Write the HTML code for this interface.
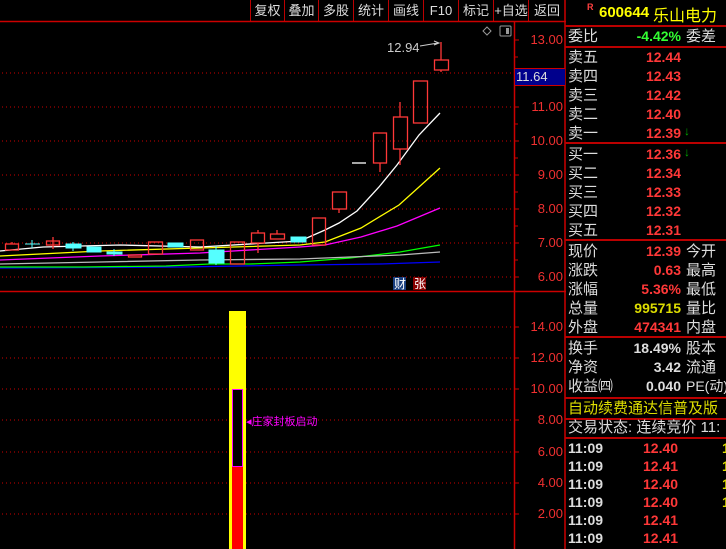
<!DOCTYPE html>
<html><head><meta charset="utf-8"><style>
*{margin:0;padding:0;box-sizing:border-box}
body{width:726px;height:549px;background:#000;overflow:hidden;position:relative;font-family:"Liberation Sans","Noto Sans CJK SC",sans-serif}
.a{position:absolute;white-space:nowrap}
.tb{position:absolute;top:0;height:22px;line-height:22px;color:#ddd;font-size:13px;text-align:center;border-left:1px solid #b00}
.r{position:absolute;left:568px;font-size:15px;color:#ddd;line-height:19px;height:19px;white-space:nowrap}
.v{position:absolute;right:45px;font-size:14px;font-weight:bold;color:#ff3838;text-align:right;line-height:19px;white-space:nowrap}
.c3{position:absolute;left:686px;font-size:15px;color:#ddd;line-height:19px;white-space:nowrap}
.hl{position:absolute;left:565px;width:161px;height:2px;background:#b00}
.ax{position:absolute;left:525px;width:38px;text-align:right;font-size:13px;color:#f03030;line-height:14px}
</style></head><body>
<div class="tb" style="left:250px;width:34px">复权</div>
<div class="tb" style="left:284px;width:34px">叠加</div>
<div class="tb" style="left:318px;width:35px">多股</div>
<div class="tb" style="left:353px;width:35px">统计</div>
<div class="tb" style="left:388px;width:35px">画线</div>
<div class="tb" style="left:423px;width:35px">F10</div>
<div class="tb" style="left:458px;width:35px">标记</div>
<div class="tb" style="left:493px;width:35px">+自选</div>
<div class="tb" style="left:528px;width:37px">返回</div>

<svg class="a" style="left:0;top:0" width="566" height="549">
<line x1="0" y1="21.5" x2="566" y2="21.5" stroke="#c00" stroke-width="1.5"/>
<line x1="0" y1="291.5" x2="566" y2="291.5" stroke="#c00" stroke-width="1.5"/>
<line x1="514.5" y1="22" x2="514.5" y2="549" stroke="#c00" stroke-width="1.5"/>
<line x1="565" y1="0" x2="565" y2="549" stroke="#c00" stroke-width="1.5"/>
<g stroke="#c00" stroke-dasharray="1 3" stroke-width="1">
<line x1="2" y1="73" x2="512" y2="73"/><line x1="2" y1="107" x2="512" y2="107"/><line x1="2" y1="141" x2="512" y2="141"/><line x1="2" y1="175" x2="512" y2="175"/><line x1="2" y1="209" x2="512" y2="209"/><line x1="2" y1="243" x2="512" y2="243"/><line x1="2" y1="277" x2="512" y2="277"/>
<line x1="2" y1="327" x2="512" y2="327"/><line x1="2" y1="358" x2="512" y2="358"/><line x1="2" y1="389" x2="512" y2="389"/><line x1="2" y1="420" x2="512" y2="420"/><line x1="2" y1="452" x2="512" y2="452"/><line x1="2" y1="483" x2="512" y2="483"/><line x1="2" y1="514" x2="512" y2="514"/>
</g>
<g stroke="#c00" stroke-width="1">
<line x1="515" y1="40" x2="519" y2="40"/><line x1="515" y1="57" x2="518" y2="57"/><line x1="515" y1="107" x2="519" y2="107"/><line x1="515" y1="124" x2="518" y2="124"/><line x1="515" y1="141" x2="519" y2="141"/><line x1="515" y1="158" x2="518" y2="158"/><line x1="515" y1="175" x2="519" y2="175"/><line x1="515" y1="192" x2="518" y2="192"/><line x1="515" y1="209" x2="519" y2="209"/><line x1="515" y1="226" x2="518" y2="226"/><line x1="515" y1="243" x2="519" y2="243"/><line x1="515" y1="260" x2="518" y2="260"/><line x1="515" y1="277" x2="519" y2="277"/>
<line x1="515" y1="327" x2="519" y2="327"/><line x1="515" y1="358" x2="519" y2="358"/><line x1="515" y1="389" x2="519" y2="389"/><line x1="515" y1="420" x2="519" y2="420"/><line x1="515" y1="452" x2="519" y2="452"/><line x1="515" y1="483" x2="519" y2="483"/><line x1="515" y1="514" x2="519" y2="514"/>
</g>
<g fill="none" stroke-width="1.3">
<polyline stroke="#00f" points="0,268 180,267 300,265 380,264 410,263 440,262"/>
<polyline stroke="#0f0" points="0,267 83,267 166,266 210,264 250,264 300,262 350,258 400,252 440,245"/>
<polyline stroke="#bbb" points="0,264 100,262 200,260 300,259 350,257 400,255 440,252"/>
<polyline stroke="#f0f" points="0,260 100,256 200,253 300,247 325,245 361,237 397,226 440,208"/>
<polyline stroke="#ff0" points="0,256 100,251 200,248 300,245 325,242 361,228 399,205 419,187 440,168"/>
<polyline stroke="#fff" points="0,251 43,247 120,245 200,247 300,241 325,230 339,223 357,211 379,187 397,165 419,135 440,113"/>
</g>
<g fill="none" stroke="#ff3838" stroke-width="1.3">
<rect x="5.5" y="244" width="13" height="6"/><line x1="12" y1="242" x2="12" y2="244"/>
<rect x="46.5" y="241" width="13" height="4"/><line x1="53" y1="237" x2="53" y2="249"/>
<rect x="128.5" y="255" width="13" height="2"/>
<rect x="148.5" y="242" width="14" height="12"/>
<rect x="190.5" y="240" width="13" height="10"/>
<rect x="230.5" y="242" width="14" height="22"/>
<rect x="251.5" y="233" width="13" height="10"/><line x1="258" y1="230" x2="258" y2="233"/><line x1="258" y1="243" x2="258" y2="253"/>
<rect x="270.5" y="234" width="14" height="5"/><line x1="277" y1="230" x2="277" y2="234"/>
<rect x="312.5" y="218" width="13" height="27"/>
<rect x="332.5" y="192" width="14" height="17"/><line x1="339" y1="209" x2="339" y2="213"/>
<rect x="373.5" y="133" width="13" height="30"/><line x1="380" y1="163" x2="380" y2="172"/>
<rect x="393.5" y="117" width="14" height="32"/><line x1="400" y1="102" x2="400" y2="117"/><line x1="400" y1="149" x2="400" y2="165"/>
<rect x="413.5" y="81" width="14" height="42"/>
<rect x="434.5" y="60" width="14" height="10"/><line x1="441" y1="42" x2="441" y2="60"/><line x1="441" y1="70" x2="441" y2="72"/>
</g>
<g fill="#5ff" stroke="#5ff">
<line x1="25" y1="244" x2="40" y2="244"/><line x1="32" y1="240" x2="32" y2="248"/>
<rect x="66" y="244" width="15" height="4"/><line x1="73" y1="242" x2="73" y2="251"/>
<rect x="87" y="247" width="14" height="5"/>
<rect x="107" y="252" width="15" height="2"/><line x1="114" y1="249" x2="114" y2="256"/>
<rect x="168" y="243" width="15" height="4"/>
<rect x="209" y="250" width="15" height="13"/><line x1="216" y1="246" x2="216" y2="265"/>
<rect x="291" y="237" width="15" height="5"/>
</g>
<line x1="352" y1="163" x2="366" y2="163" stroke="#fff" stroke-width="1.3"/>
<text x="387" y="52" fill="#ccc" font-size="13" font-family="Liberation Sans">12.94</text>
<path d="M420 46 L438 43 M434 41 L439 43 L434 45" stroke="#ccc" fill="none" stroke-width="1"/>
<path d="M487 27 L491 31 L487 35 L483 31 Z" stroke="#999" fill="none"/>
<rect x="500" y="26" width="11" height="10" stroke="#999" fill="none" rx="1"/><rect x="506" y="28" width="3" height="6" fill="#999"/>
<rect x="393" y="277" width="13" height="13" fill="#1a3f80"/><text x="394" y="288" fill="#fff" font-size="12" font-family="Noto Sans CJK SC">财</text>
<rect x="413" y="277" width="13" height="13" fill="#800"/><text x="414" y="288" fill="#fff" font-size="12" font-family="Noto Sans CJK SC">张</text>
<rect x="229" y="311" width="17" height="238" fill="#ff0"/>
<rect x="232" y="467" width="11" height="82" fill="#f00"/>
<rect x="232.5" y="389.5" width="10" height="77" fill="#000" stroke="#f0f"/>
<text x="246" y="425" fill="#f0f" font-size="11" font-family="Noto Sans CJK SC">◂庄家封板启动</text>
</svg>
<div class="ax" style="top:33px">13.00</div>
<div class="a" style="left:515px;top:68px;width:50px;height:18px;background:#00008c;border-top:1px solid #c00;border-bottom:1px solid #c00;color:#ddd;font-size:13px;line-height:16px;padding-left:1px">11.64</div>
<div class="ax" style="top:100px">11.00</div>
<div class="ax" style="top:134px">10.00</div>
<div class="ax" style="top:168px">9.00</div>
<div class="ax" style="top:202px">8.00</div>
<div class="ax" style="top:236px">7.00</div>
<div class="ax" style="top:270px">6.00</div>
<div class="ax" style="top:320px">14.00</div>
<div class="ax" style="top:351px">12.00</div>
<div class="ax" style="top:382px">10.00</div>
<div class="ax" style="top:413px">8.00</div>
<div class="ax" style="top:445px">6.00</div>
<div class="ax" style="top:476px">4.00</div>
<div class="ax" style="top:507px">2.00</div>

<div class="a" style="left:587px;top:2px;color:#ff4040;font-size:9px;font-weight:bold">R</div>
<div class="a" style="left:599px;top:4px;color:#ff0;font-size:15px;font-weight:bold">600644</div>
<div class="a" style="left:653px;top:2px;color:#ff0;font-size:16px">乐山电力</div>
<div class="hl" style="top:25px"></div>
<div class="r" style="top:27px">委比</div><div class="v" style="top:27px;color:#3f3">-4.42%</div><div class="c3" style="top:27px">委差</div>
<div class="hl" style="top:46px"></div>
<div class="r" style="top:48px">卖五</div><div class="v" style="top:48px">12.44</div>
<div class="r" style="top:67px">卖四</div><div class="v" style="top:67px">12.43</div>
<div class="r" style="top:86px">卖三</div><div class="v" style="top:86px">12.42</div>
<div class="r" style="top:105px">卖二</div><div class="v" style="top:105px">12.40</div>
<div class="r" style="top:124px">卖一</div><div class="v" style="top:124px">12.39</div><div class="a" style="left:684px;top:124px;color:#0a0;font-size:12px;font-weight:bold">↓</div>
<div class="hl" style="top:142px"></div>
<div class="r" style="top:145px">买一</div><div class="v" style="top:145px">12.36</div><div class="a" style="left:684px;top:145px;color:#0a0;font-size:12px;font-weight:bold">↓</div>
<div class="r" style="top:164px">买二</div><div class="v" style="top:164px">12.34</div>
<div class="r" style="top:183px">买三</div><div class="v" style="top:183px">12.33</div>
<div class="r" style="top:202px">买四</div><div class="v" style="top:202px">12.32</div>
<div class="r" style="top:221px">买五</div><div class="v" style="top:221px">12.31</div>
<div class="hl" style="top:239px"></div>
<div class="r" style="top:242px">现价</div><div class="v" style="top:242px">12.39</div><div class="c3" style="top:242px">今开</div>
<div class="r" style="top:261px">涨跌</div><div class="v" style="top:261px">0.63</div><div class="c3" style="top:261px">最高</div>
<div class="r" style="top:280px">涨幅</div><div class="v" style="top:280px">5.36%</div><div class="c3" style="top:280px">最低</div>
<div class="r" style="top:299px">总量</div><div class="v" style="top:299px;color:#dd0">995715</div><div class="c3" style="top:299px">量比</div>
<div class="r" style="top:318px">外盘</div><div class="v" style="top:318px">474341</div><div class="c3" style="top:318px">内盘</div>
<div class="hl" style="top:336px"></div>
<div class="r" style="top:339px">换手</div><div class="v" style="top:339px;color:#ddd">18.49%</div><div class="c3" style="top:339px">股本</div>
<div class="r" style="top:358px">净资</div><div class="v" style="top:358px;color:#ddd">3.42</div><div class="c3" style="top:358px">流通</div>
<div class="r" style="top:377px">收益㈣</div><div class="v" style="top:377px;color:#ddd">0.040</div><div class="c3" style="top:377px;font-size:14px">PE(动)</div>
<div class="hl" style="top:397px"></div>
<div class="r" style="top:399px;color:#dd0">自动续费通达信普及版</div>
<div class="hl" style="top:418px"></div>
<div class="r" style="top:418px">交易状态: 连续竞价 11:</div>
<div class="hl" style="top:437px"></div>
<div class="r" style="top:439px;font-weight:bold;font-size:14px">11:09</div><div class="a" style="left:643px;top:439px;color:#ff3838;font-size:14px;font-weight:bold;line-height:19px">12.40</div><div class="a" style="left:722px;top:439px;color:#dd0;font-size:14px;font-weight:bold;line-height:19px">1</div>
<div class="r" style="top:457px;font-weight:bold;font-size:14px">11:09</div><div class="a" style="left:643px;top:457px;color:#ff3838;font-size:14px;font-weight:bold;line-height:19px">12.41</div><div class="a" style="left:722px;top:457px;color:#dd0;font-size:14px;font-weight:bold;line-height:19px">1</div>
<div class="r" style="top:475px;font-weight:bold;font-size:14px">11:09</div><div class="a" style="left:643px;top:475px;color:#ff3838;font-size:14px;font-weight:bold;line-height:19px">12.40</div><div class="a" style="left:722px;top:475px;color:#dd0;font-size:14px;font-weight:bold;line-height:19px">1</div>
<div class="r" style="top:493px;font-weight:bold;font-size:14px">11:09</div><div class="a" style="left:643px;top:493px;color:#ff3838;font-size:14px;font-weight:bold;line-height:19px">12.40</div><div class="a" style="left:722px;top:493px;color:#dd0;font-size:14px;font-weight:bold;line-height:19px">1</div>
<div class="r" style="top:511px;font-weight:bold;font-size:14px">11:09</div><div class="a" style="left:643px;top:511px;color:#ff3838;font-size:14px;font-weight:bold;line-height:19px">12.41</div>
<div class="r" style="top:529px;font-weight:bold;font-size:14px">11:09</div><div class="a" style="left:643px;top:529px;color:#ff3838;font-size:14px;font-weight:bold;line-height:19px">12.41</div>
</body></html>
